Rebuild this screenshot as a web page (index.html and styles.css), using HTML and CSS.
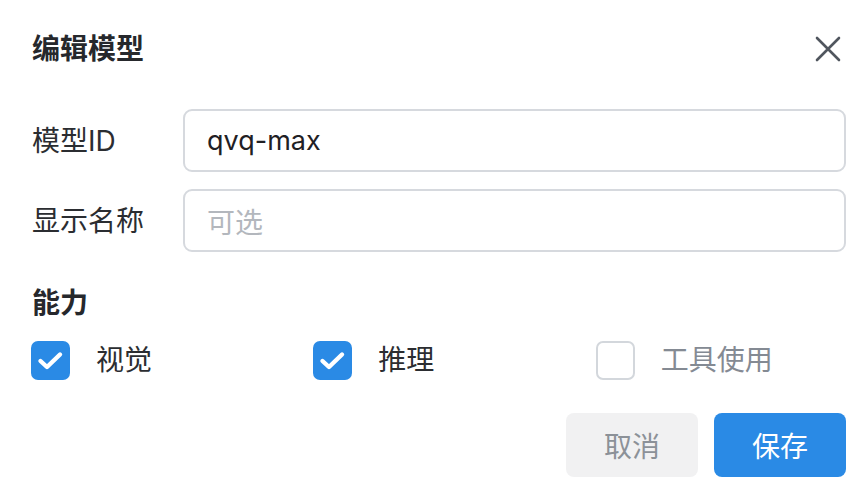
FILE: index.html
```html
<!DOCTYPE html>
<html lang="zh">
<head>
<meta charset="utf-8">
<link rel="stylesheet" href="styles.css">
</head>
<body>
<div class="dialog">
  <div class="header">
    <h1 class="title">编辑模型</h1>
    <button class="close" aria-label="关闭">
      <svg width="26" height="26" viewBox="0 0 26 26"><path d="M2 2 L24 24 M24 2 L2 24" stroke="#50565e" stroke-width="2.6" stroke-linecap="round" fill="none"/></svg>
    </button>
  </div>
  <div class="form">
    <label class="label">模型ID</label>
    <div class="input"><span class="value">qvq-max</span></div>
    <label class="label">显示名称</label>
    <div class="input"><span class="placeholder">可选</span></div>
  </div>
  <div class="section">能力</div>
  <div class="caps">
    <div class="cap">
      <span class="box checked"><svg width="39" height="39" viewBox="0 0 39 39"><path d="M9.5 20 L16 26 L29 13.5" stroke="#fff" stroke-width="4.4" stroke-linecap="round" stroke-linejoin="round" fill="none"/></svg></span>
      <span class="cap-text">视觉</span>
    </div>
    <div class="cap">
      <span class="box checked"><svg width="39" height="39" viewBox="0 0 39 39"><path d="M9.5 20 L16 26 L29 13.5" stroke="#fff" stroke-width="4.4" stroke-linecap="round" stroke-linejoin="round" fill="none"/></svg></span>
      <span class="cap-text">推理</span>
    </div>
    <div class="cap off">
      <span class="box"></span>
      <span class="cap-text">工具使用</span>
    </div>
  </div>
  <div class="actions">
    <button class="btn cancel">取消</button>
    <button class="btn save">保存</button>
  </div>
</div>
</body>
</html>
```
FILE: styles.css
```css
* { box-sizing: border-box; }
html, body { margin: 0; padding: 0; background: #fff; }
body {
  font-family: "Inter", "Noto Sans CJK SC", sans-serif;
  color: #2b2d31;
  width: 866px;
  height: 496px;
  overflow: hidden;
}
.dialog {
  padding: 29px 20px 0 32px;
}
.header {
  display: flex;
  align-items: center;
  justify-content: space-between;
  height: 40px;
}
.title {
  margin: 0;
  font-size: 28px;
  font-weight: 700;
  line-height: 40px;
  color: #26282c;
}
.close {
  border: 0;
  background: none;
  padding: 0;
  margin-right: 5px;
  width: 26px;
  height: 26px;
  display: flex;
}
.form {
  margin-top: 40px;
  display: grid;
  grid-template-columns: 127px 1fr;
  column-gap: 24px;
  row-gap: 17px;
  align-items: center;
}
.label {
  font-size: 28px;
  line-height: 40px;
  color: #2b2d31;
}
.input {
  height: 63px;
  border: 2px solid #d6d9de;
  border-radius: 9px;
  display: flex;
  align-items: center;
  padding-left: 22px;
  font-size: 27px;
}
.value { color: #1f2024; }
.placeholder { color: #b3b7bd; font-size: 28px; }
.section {
  margin-top: 31px;
  font-size: 28px;
  font-weight: 700;
  line-height: 40px;
  color: #26282c;
}
.caps {
  margin-top: 18px;
  margin-left: -1px;
  display: grid;
  grid-template-columns: 1fr 1fr 1fr;
  column-gap: 32px;
}
.cap {
  display: flex;
  align-items: center;
  height: 39px;
}
.box {
  width: 39px;
  height: 39px;
  border-radius: 7px;
  border: 2px solid #d3d7dc;
  background: #fff;
  display: flex;
  align-items: center;
  justify-content: center;
  flex: none;
  overflow: hidden;
}
.box.checked {
  background: #2a8ae5;
  border: 0;
}
.cap-text {
  margin-left: 26px;
  font-size: 28px;
  line-height: 39px;
  color: #2b2d31;
}
.cap.off .cap-text { color: #848a93; }
.actions {
  margin-top: 33px;
  display: flex;
  justify-content: flex-end;
  gap: 16px;
}
.btn {
  height: 64px;
  width: 132px;
  border: 0;
  border-radius: 8px;
  font-family: "Inter", "Noto Sans CJK SC", sans-serif;
  font-size: 28px;
}
.cancel {
  background: #f1f1f2;
  color: #8c9198;
}
.save {
  background: #2a8ae5;
  color: #fff;
}
```
